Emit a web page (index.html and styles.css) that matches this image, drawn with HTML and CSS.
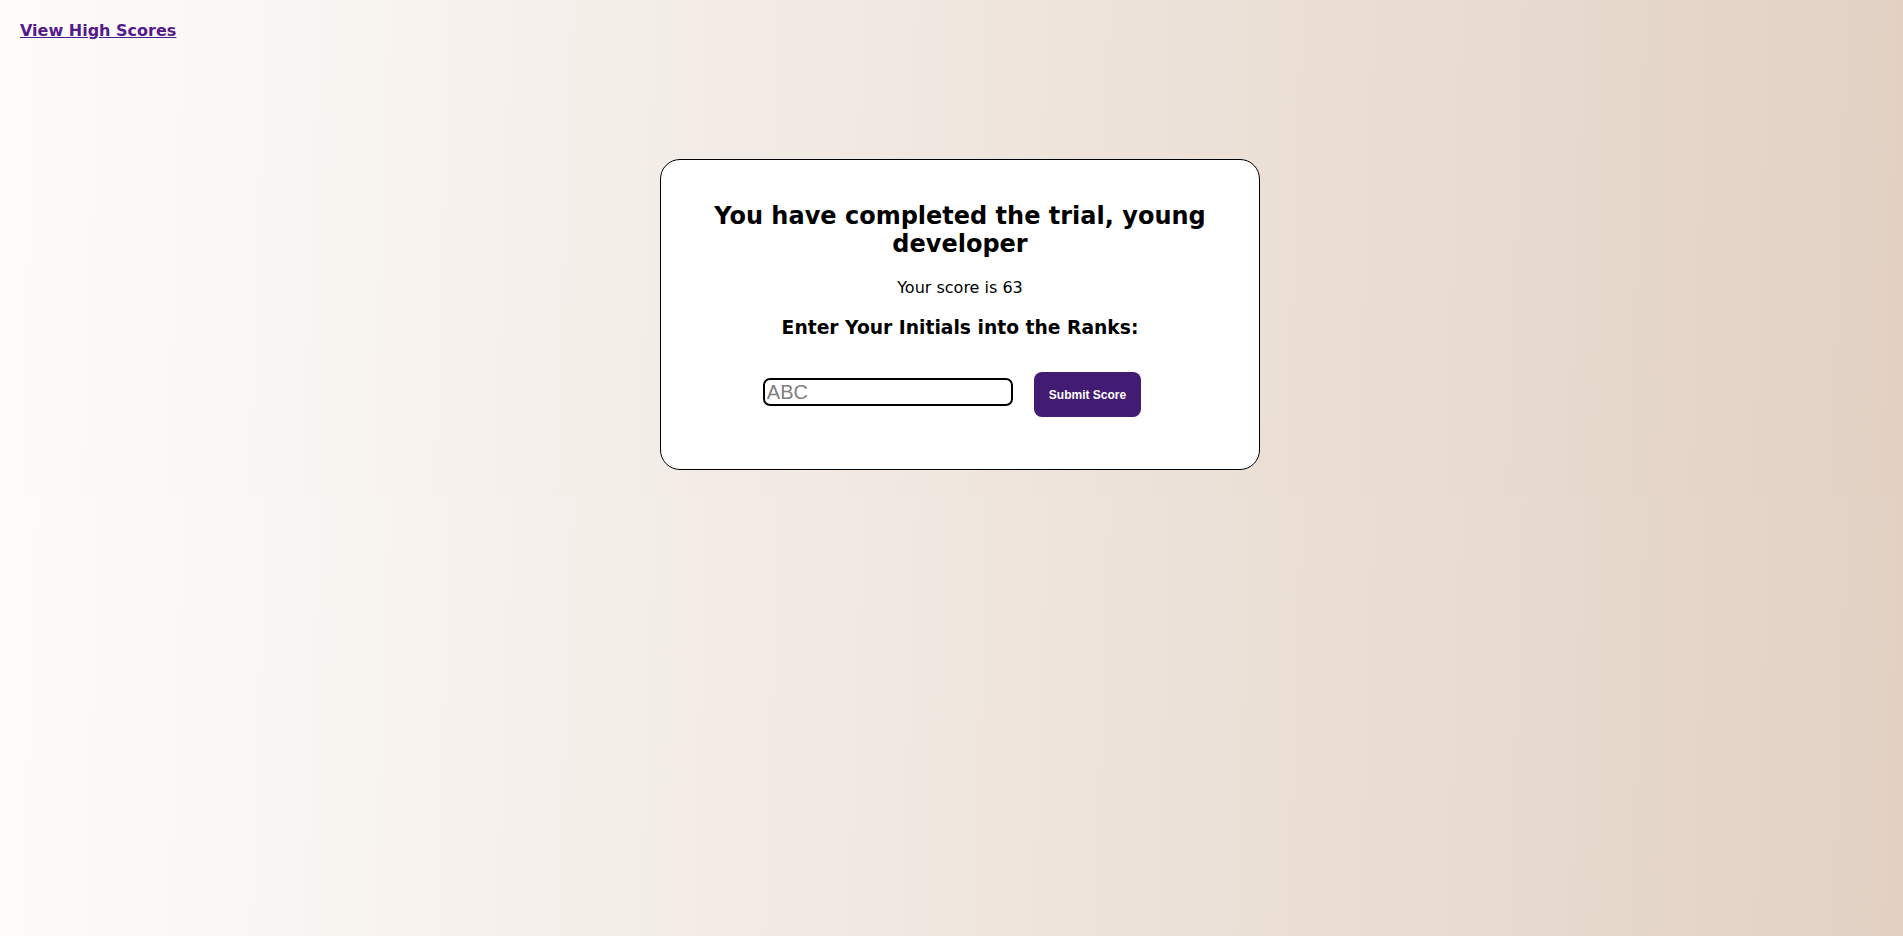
FILE: index.html
```html
<!DOCTYPE html>
<html lang="en">
<head>
<meta charset="utf-8">
<title>Quiz Complete</title>
<link rel="stylesheet" href="styles.css">
</head>
<body>
<div class="page">
  <header class="top">
    <a class="scores-link" href="#">View High Scores</a>
  </header>
  <main class="card">
    <h2 class="title">You have completed the trial, young developer</h2>
    <p class="score">Your score is 63</p>
    <h3 class="prompt">Enter Your Initials into the Ranks:</h3>
    <form class="entry">
      <input class="initials" type="text" placeholder="ABC">
      <button class="submit" type="button">Submit Score</button>
    </form>
  </main>
</div>
</body>
</html>
```
FILE: styles.css
```css
html {
  margin: 0;
}
body {
  margin: 0;
  font-family: "DejaVu Sans", Verdana, sans-serif;
  background: linear-gradient(92deg, #fdfcfb 0%, #e2d1c3 100%);
  color: #000;
}
.page {
  display: flex;
  flex-direction: column;
  padding: 21px 20px 26px 37px;
}
.top {
  margin-left: -17px;
}
.scores-link {
  color: #551a8b;
  font-weight: bold;
  font-size: 16px;
  text-decoration: underline;
}
.card {
  width: 600px;
  box-sizing: border-box;
  align-self: center;
  margin-top: 119px;
  background: #fff;
  border: 1px solid #000;
  border-radius: 20px;
  padding: 22px 40px 52px;
  text-align: center;
}
.title {
  font-size: 24px;
  margin: 20px 0;
}
.score {
  font-size: 16px;
  margin: 16px 0;
}
.prompt {
  font-size: 18.72px;
  margin: 20px 0;
}
.entry {
  display: flex;
  justify-content: center;
  align-items: center;
  gap: 21px;
  padding-right: 16px;
  margin-top: 29px;
}
.initials {
  width: 250px;
  height: 28px;
  box-sizing: border-box;
  border: 2px solid #000;
  border-radius: 7px;
  font-family: "Liberation Sans", Arial, sans-serif;
  font-size: 20px;
  padding: 0 2px;
  margin: 0;
}
.initials::placeholder {
  color: #808080;
}
.submit {
  height: 45px;
  padding: 0 15px;
  border: none;
  border-radius: 8px;
  background: #421b72;
  color: #fff;
  font-family: "Liberation Sans", Arial, sans-serif;
  font-weight: bold;
  font-size: 12px;
  margin-top: 5px;
}
```
